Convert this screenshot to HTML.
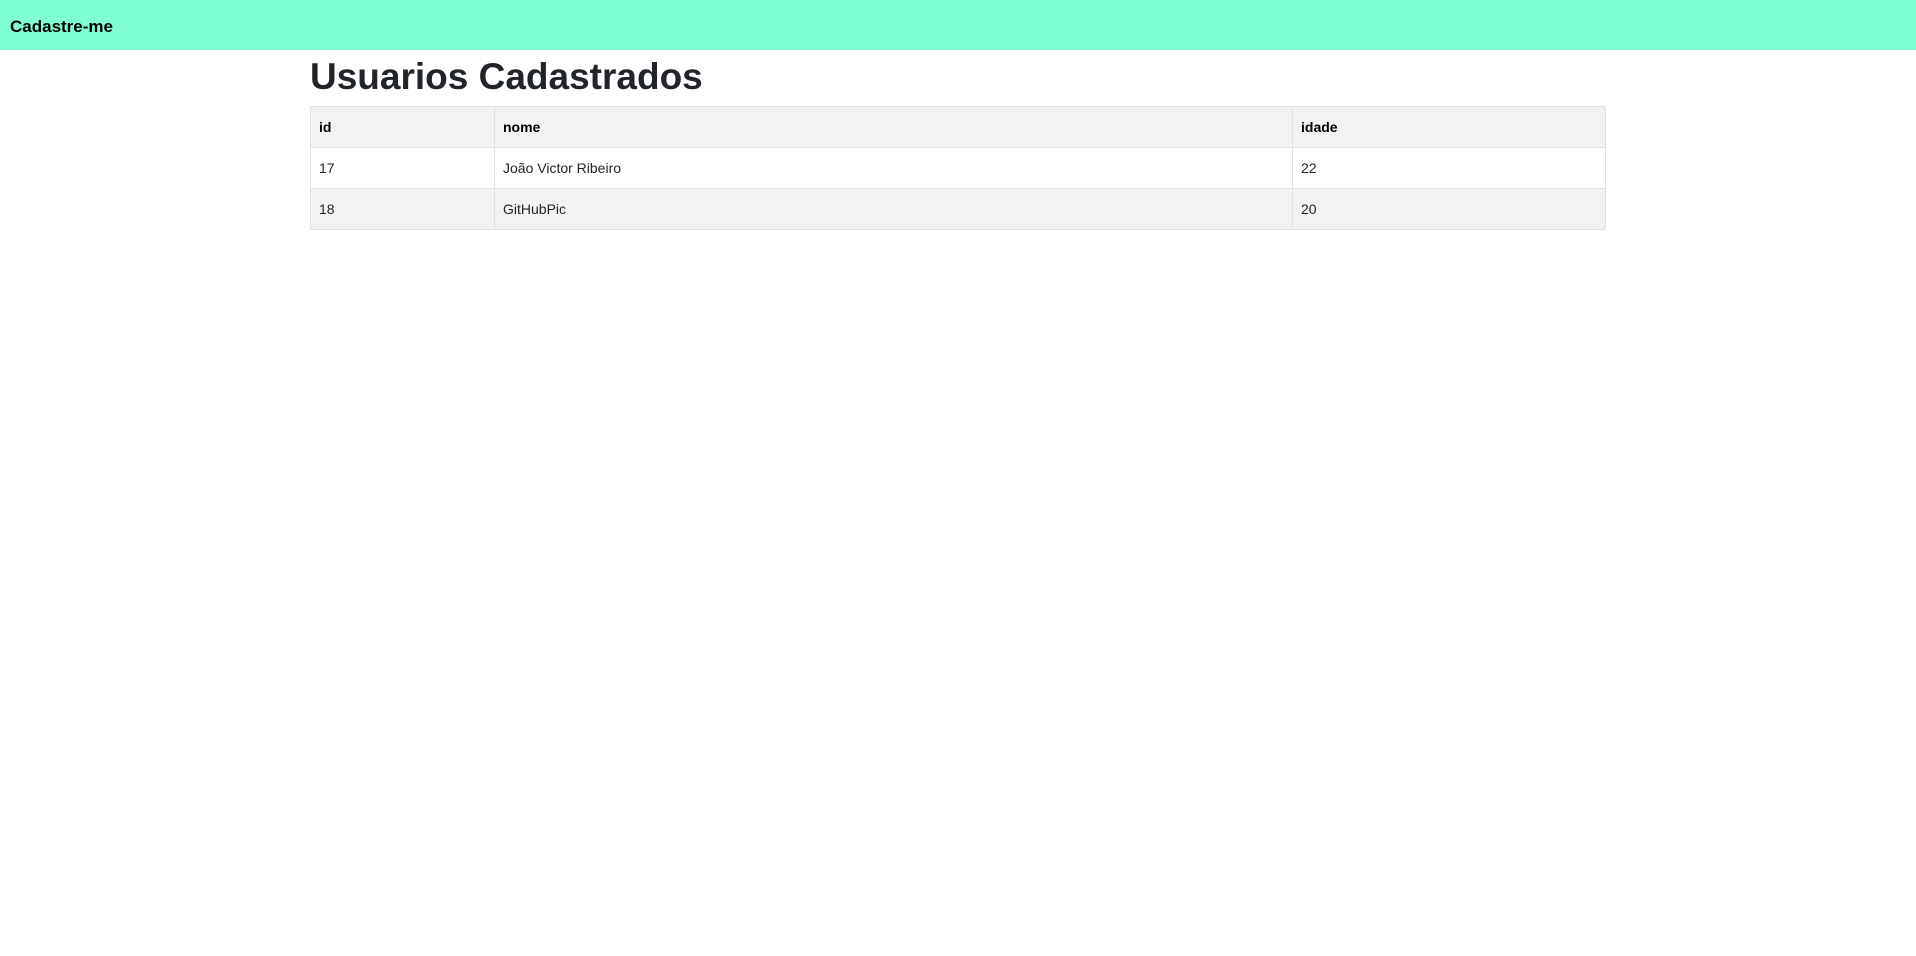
<!DOCTYPE html>
<html><head><meta charset="utf-8"><style>
*{box-sizing:border-box}
body{margin:0;font-family:"Liberation Sans",sans-serif;color:#212529;background:#fff;width:1916px;height:956px;overflow:hidden}
.nav{height:50px;background:#7fffd4;display:flex;align-items:center;padding-left:10px;padding-top:3px;font-size:17px;font-weight:bold;color:#000}
.c{width:1296px;margin-left:310px}
h1{margin:0 0 8px;font-size:37px;font-weight:bold;line-height:48px;color:#212529;padding-top:3px;height:48px}
table{width:1296px;border-collapse:collapse;font-size:14px}
td,th{border:1px solid #dee2e6;padding:8px;line-height:24px;text-align:left}
th{font-weight:bold;color:#000}
tr.s{background:#f2f2f2}
</style></head><body>
<div class="nav">Cadastre-me</div>
<div class="c">
<h1>Usuarios Cadastrados</h1>
<table>
<tr class="s"><th style="width:184px">id</th><th style="width:798px">nome</th><th>idade</th></tr>
<tr><td>17</td><td>João Victor Ribeiro</td><td>22</td></tr>
<tr class="s"><td>18</td><td>GitHubPic</td><td>20</td></tr>
</table>
</div>
</body></html>
